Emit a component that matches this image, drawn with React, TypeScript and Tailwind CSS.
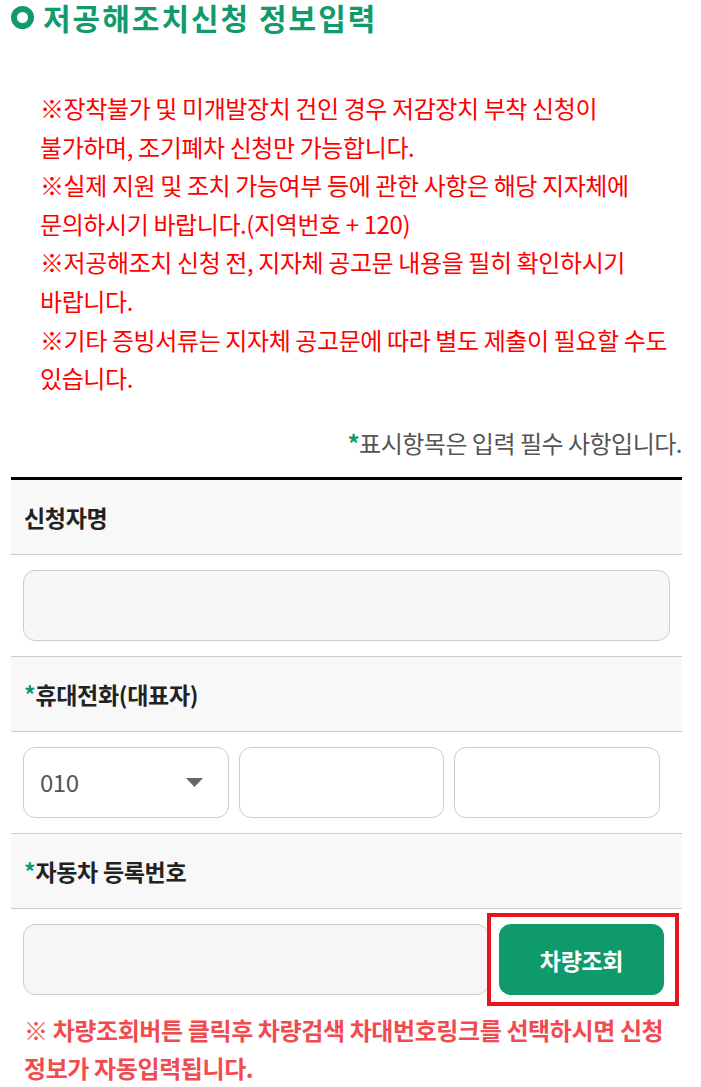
const font = { fontFamily: '"Noto Sans CJK KR", "Noto Sans", sans-serif' }

function RowHeader({ label, required }: { label: string; required?: boolean }) {
  return (
    <div className="h-[75px] flex items-center px-[13px] bg-[#f8f8f8] border-b border-[#cccccc]">
      <span className="text-[23px] font-bold text-[#222] tracking-[-0.3px]">
        {required && <span className="text-[#0f9a6b]">*</span>}
        {label}
      </span>
    </div>
  )
}

export default function App() {
  return (
    <div className="w-[701px] bg-white pb-[10px]" style={font}>
      <h1 className="flex items-center pl-[11px] h-[34px] text-[30px] font-bold text-[#119a6c] leading-[34px] tracking-[2px]">
        <span className="mr-[9px] w-[23px] h-[23px] shrink-0 rounded-full border-[6px] border-[#119a6c]" />
        저공해조치신청 정보입력
      </h1>

      <div className="ml-[11px] w-[671px]">
        <div className="mt-[55px] pl-[29px] text-[24px] leading-[38.6px] text-[#ff0000] tracking-[-0.4px] break-keep">
          <p>※장착불가 및 미개발장치 건인 경우 저감장치 부착 신청이 불가하며, 조기폐차 신청만 가능합니다.</p>
          <p>※실제 지원 및 조치 가능여부 등에 관한 사항은 해당 지자체에 문의하시기 바랍니다.(지역번호 + 120)</p>
          <p>※저공해조치 신청 전, 지자체 공고문 내용을 필히 확인하시기 바랍니다.</p>
          <p>※기타 증빙서류는 지자체 공고문에 따라 별도 제출이 필요할 수도 있습니다.</p>
        </div>

        <p className="mt-[29px] text-right text-[24px] leading-[32px] text-[#555] tracking-[-0.5px]">
          <span className="text-[#0f9a6b] font-bold">*</span>표시항목은 입력 필수 사항입니다.
        </p>

        <div className="mt-[18px] border-t-[3px] border-black">
          <RowHeader label="신청자명" />
          <div className="h-[102px] flex items-center px-[12px] border-b border-[#cccccc]">
            <div className="w-[647px] h-[71px] rounded-[12px] border border-[#cccccc] bg-[#f6f6f6]" />
          </div>

          <RowHeader label="휴대전화(대표자)" required />
          <div className="h-[102px] flex items-center gap-[10px] px-[12px] border-b border-[#cccccc]">
            <div className="w-[206px] h-[71px] shrink-0 rounded-[12px] border border-[#cccccc] bg-white flex items-center justify-between pl-[16px] pr-[25px]">
              <span className="text-[24px] text-[#555] tracking-[-0.5px]">010</span>
              <svg width="17" height="9" viewBox="0 0 17 9">
                <path d="M0 0h17L8.5 9z" fill="#666" />
              </svg>
            </div>
            <div className="w-[205px] h-[71px] shrink-0 rounded-[12px] border border-[#cccccc] bg-white" />
            <div className="w-[206px] h-[71px] shrink-0 rounded-[12px] border border-[#cccccc] bg-white" />
          </div>

          <RowHeader label="자동차 등록번호" required />
          <div className="h-[102px] flex items-center px-[12px]">
            <div className="w-[466px] h-[71px] shrink-0 rounded-[12px] border border-[#cccccc] bg-[#f6f6f6]" />
            <div className="ml-[-2px] w-[192px] h-[93px] shrink-0 border-[4px] border-[#e8141b] flex items-center pl-[8px]">
              <button className="w-[165px] h-[71px] rounded-[12px] bg-[#0f9a6b] text-white text-[23px] font-bold tracking-[-0.3px]">
                차량조회
              </button>
            </div>
          </div>
        </div>

        <p className="px-[13px] text-[24px] font-bold leading-[38px] text-[#f24b4f] tracking-[-0.4px] break-keep">
          ※ 차량조회버튼 클릭후 차량검색 차대번호링크를 선택하시면 신청 정보가 자동입력됩니다.
        </p>
      </div>
    </div>
  )
}
